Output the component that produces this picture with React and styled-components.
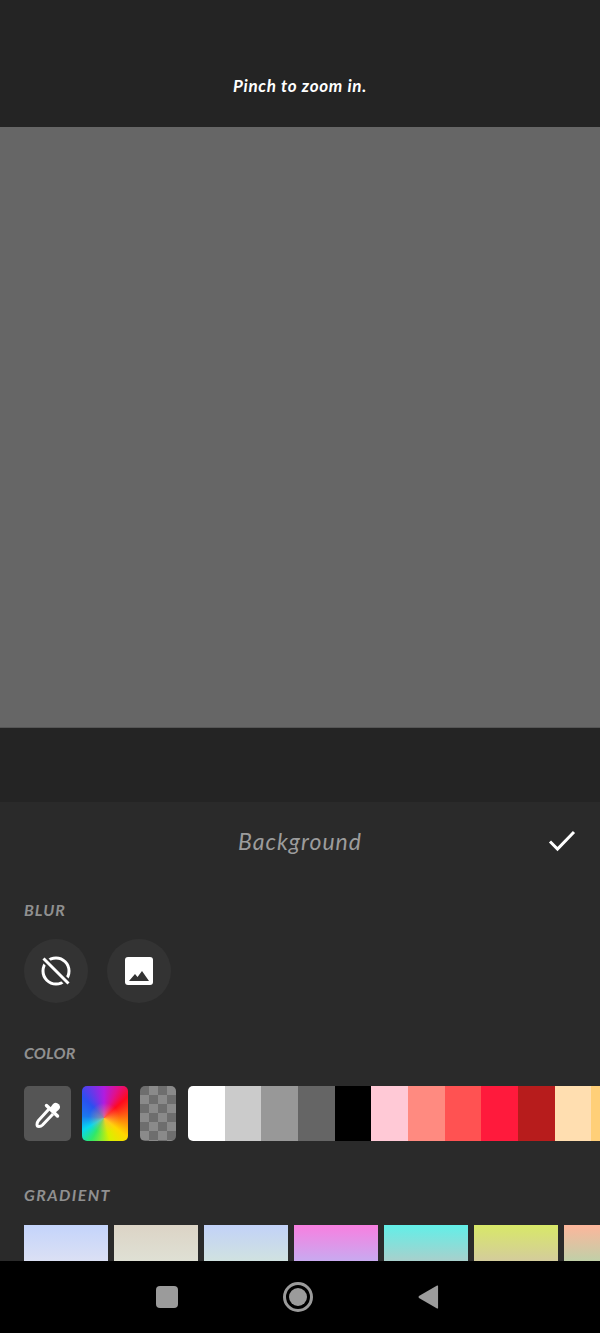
import React from 'react'
import styled, { createGlobalStyle } from 'styled-components'

const GlobalStyle = createGlobalStyle`
  html, body {
    margin: 0;
    padding: 0;
    background: #242424;
  }
  * {
    box-sizing: border-box;
  }
`

const Screen = styled.div`
  display: flex;
  flex-direction: column;
  width: 600px;
  height: 1333px;
  overflow: hidden;
  background: #242424;
  font-family: 'Lato', 'Open Sans', sans-serif;
`

const Hint = styled.div`
  display: flex;
  align-items: center;
  justify-content: center;
  height: 127px;
  padding-top: 44px;
  color: #ffffff;
  font-size: 17px;
  font-weight: 700;
  font-style: italic;
  letter-spacing: 0.7px;
`

const Canvas = styled.div`
  height: 601px;
  background: #666666;
  border-bottom: 1px solid #555555;
`

const Gutter = styled.div`
  height: 74px;
  background: #242424;
`

const Panel = styled.div`
  flex: 1;
  min-height: 0;
  overflow: hidden;
  background: #2a2a2a;
`

const PanelHeader = styled.div`
  position: relative;
  display: flex;
  align-items: center;
  justify-content: center;
  height: 80px;
  padding-bottom: 2px;
`

const Title = styled.div`
  color: #9c9c9c;
  font-size: 23px;
  font-style: italic;
  letter-spacing: 1px;
`

const Confirm = styled.svg`
  position: absolute;
  right: 24px;
  top: 27px;
  width: 28px;
  height: 24px;
`

const SectionLabel = styled.div`
  height: 18px;
  margin-top: ${props => props.top}px;
  padding-left: 24px;
  color: #909090;
  font-size: 16px;
  line-height: 18px;
  font-weight: 700;
  font-style: italic;
  letter-spacing: ${props => props.spacing}px;
`

const BlurRow = styled.div`
  display: flex;
  gap: 19px;
  margin-top: 20px;
  padding-left: 24px;
`

const RoundButton = styled.div`
  display: flex;
  align-items: center;
  justify-content: center;
  width: 64px;
  height: 64px;
  border-radius: 50%;
  background: #333333;
`

const ColorRow = styled.div`
  display: flex;
  height: 55px;
  margin-top: 24px;
  padding-left: 24px;
  width: 700px;
`

const PickerButton = styled.div`
  display: flex;
  align-items: center;
  justify-content: center;
  width: 47px;
  margin-right: 11px;
  border-radius: 5px;
  background: #555555;
`

const RainbowButton = styled.div`
  width: 46px;
  margin-right: 12px;
  border-radius: 5px;
  background:
    radial-gradient(circle at 48% 58%, rgba(255, 170, 90, 0.55) 0, rgba(255, 170, 90, 0) 38%),
    conic-gradient(
      from 0deg at 48% 58%,
      #b01ce0 0deg,
      #e0108a 25deg,
      #ff0a1e 48deg,
      #ff5a12 80deg,
      #ffd800 130deg,
      #d8f000 165deg,
      #30e868 210deg,
      #08d8f0 240deg,
      #1a78f0 275deg,
      #2a50f0 315deg,
      #b01ce0 360deg
    );
`

const TransparentButton = styled.div`
  width: 36px;
  margin-right: 12px;
  border-radius: 5px;
  background-color: #8a8a8a;
  background-image: conic-gradient(
    #6e6e6e 0 25%,
    transparent 0 50%,
    #6e6e6e 0 75%,
    transparent 0
  );
  background-size: 18px 18px;
  background-position: 0 9px;
`

const SwatchStrip = styled.div`
  display: flex;
  flex-shrink: 0;
  border-radius: 5px 0 0 5px;
  overflow: hidden;
`

const Swatch = styled.div`
  width: 36.67px;
  background: ${props => props.color};
`

const GradientRow = styled.div`
  display: flex;
  gap: 6px;
  width: 700px;
  margin-top: 21px;
  padding-left: 24px;
`

const GradientTile = styled.div`
  flex-shrink: 0;
  width: 84px;
  height: 36px;
  background: linear-gradient(${props => props.from}, ${props => props.to});
`

const NavBar = styled.div`
  display: flex;
  align-items: center;
  justify-content: center;
  gap: 105px;
  height: 72px;
  padding-right: 5px;
  background: #000000;
`

const NavSquare = styled.div`
  width: 22px;
  height: 22px;
  border-radius: 4px;
  background: #9b9b9b;
`

const NavCircle = styled.div`
  display: flex;
  align-items: center;
  justify-content: center;
  width: 30px;
  height: 30px;
  border: 3px solid #9b9b9b;
  border-radius: 50%;

  &::after {
    content: '';
    width: 18px;
    height: 18px;
    border-radius: 50%;
    background: #9b9b9b;
  }
`

const NavBack = styled.svg`
  width: 21px;
  height: 26px;
`

const greys = ['#ffffff', '#cbcbcb', '#989898', '#656565', '#000000']
const reds = ['#ffc9d6', '#ff8a80', '#ff5252', '#ff1a3c', '#b71c1c']
const oranges = ['#ffdeb0', '#ffcf78']

const gradients = [
  ['#c4d4fb', '#dbe0f4'],
  ['#dcd4c6', '#dfe0d4'],
  ['#c2d2f8', '#d0e2e0'],
  ['#f87fe0', '#c8aaf0'],
  ['#62efe8', '#a8d0cc'],
  ['#d8e868', '#d4cc9c'],
  ['#fdb69c', '#c0d0a8'],
]

const NoBlurIcon = () => (
  <svg width="32" height="32" viewBox="0 0 32 32" fill="none" stroke="#fff" strokeWidth="3">
    <circle cx="16" cy="16" r="13" />
    <path d="M3.5 3.5 L28.5 28.5" stroke="#333333" strokeWidth="7" />
    <path d="M3.5 3.5 L28.5 28.5" />
  </svg>
)

const PictureIcon = () => (
  <svg width="28" height="28" viewBox="0 0 28 28">
    <rect width="28" height="28" rx="3" fill="#fff" />
    <path d="M4 24 L10 17 L12.5 20 L17 14 L24 24 Z" fill="#333333" />
  </svg>
)

const DropperIcon = () => (
  <svg width="26" height="28" viewBox="0 0 26 28" fill="none">
    <path
      d="M14 9 L3.5 20.5 Q2 22.5 2 24.5 Q2 26.5 4 26.5 Q6 26.5 7.5 25 L18 14"
      stroke="#fff"
      strokeWidth="3"
      strokeLinejoin="round"
    />
    <path d="M11.5 5.5 L22.5 16" stroke="#fff" strokeWidth="3.4" strokeLinecap="round" />
    <path d="M15 8 L18 4 A3.8 3.8 0 1 1 23.5 10 L20 13 Z" fill="#fff" />
  </svg>
)

const App = () => (
  <Screen>
    <GlobalStyle />
    <Hint>Pinch to zoom in.</Hint>
    <Canvas />
    <Gutter />
    <Panel>
      <PanelHeader>
        <Title>Background</Title>
        <Confirm viewBox="0 0 28 24" fill="none">
          <path d="M2 12.5 L9.5 20 L26 3" stroke="#fff" strokeWidth="3" />
        </Confirm>
      </PanelHeader>
      <SectionLabel top={19} spacing={1}>BLUR</SectionLabel>
      <BlurRow>
        <RoundButton>
          <NoBlurIcon />
        </RoundButton>
        <RoundButton>
          <PictureIcon />
        </RoundButton>
      </BlurRow>
      <SectionLabel top={41} spacing={0.2}>COLOR</SectionLabel>
      <ColorRow>
        <PickerButton>
          <DropperIcon />
        </PickerButton>
        <RainbowButton />
        <TransparentButton />
        <SwatchStrip>
          {[...greys, ...reds, ...oranges].map(color => (
            <Swatch key={color} color={color} />
          ))}
        </SwatchStrip>
      </ColorRow>
      <SectionLabel top={45} spacing={1.4}>GRADIENT</SectionLabel>
      <GradientRow>
        {gradients.map(([from, to]) => (
          <GradientTile key={from} from={from} to={to} />
        ))}
      </GradientRow>
    </Panel>
    <NavBar>
      <NavSquare />
      <NavCircle />
      <NavBack viewBox="0 0 22 26">
        <path d="M21 1.5 V24.5 Q21 25.5 20 25 L1 14 Q0 13 1 12 L20 1 Q21 0.5 21 1.5 Z" fill="#9b9b9b" />
      </NavBack>
    </NavBar>
  </Screen>
)

export default App
